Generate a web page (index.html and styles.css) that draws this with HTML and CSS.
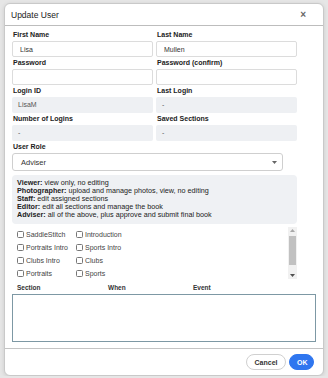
FILE: index.html
```html
<!DOCTYPE html>
<html lang="en">
<head>
    <meta charset="UTF-8">
    <meta name="viewport" content="width=device-width, initial-scale=1.0">
    <title>Update User</title>
    <link rel="stylesheet" href="styles.css">
</head>
<body>
    <div class="modal">
        <div class="modal-header">
            <span class="modal-title">Update User</span>
            <span class="modal-close">&times;</span>
        </div>

        <div class="modal-body">
            <div class="fields">
                <div class="field">
                    <label>First Name</label>
                    <input class="input" type="text" value="Lisa">
                </div>
                <div class="field">
                    <label>Last Name</label>
                    <input class="input" type="text" value="Mullen">
                </div>
                <div class="field">
                    <label>Password</label>
                    <input class="input" type="password" value="">
                </div>
                <div class="field">
                    <label>Password (confirm)</label>
                    <input class="input" type="password" value="">
                </div>
                <div class="field">
                    <label>Login ID</label>
                    <div class="readonly">LisaM</div>
                </div>
                <div class="field">
                    <label>Last Login</label>
                    <div class="readonly">-</div>
                </div>
                <div class="field">
                    <label>Number of Logins</label>
                    <div class="readonly">-</div>
                </div>
                <div class="field">
                    <label>Saved Sections</label>
                    <div class="readonly">-</div>
                </div>
            </div>

            <div class="field">
                <label>User Role</label>
                <div class="select">
                    <span>Adviser</span>
                    <svg class="caret" width="5" height="3" viewBox="0 0 5 3"><path d="M0 0h5L2.5 3z" fill="#666"/></svg>
                </div>
            </div>

            <div class="role-help">
                <div><b>Viewer:</b> view only, no editing</div>
                <div><b>Photographer:</b> upload and manage photos, view, no editing</div>
                <div><b>Staff:</b> edit assigned sections</div>
                <div><b>Editor:</b> edit all sections and manage the book</div>
                <div><b>Adviser:</b> all of the above, plus approve and submit final book</div>
            </div>

            <div class="sections">
                <div class="section-list">
                    <label class="check"><span class="box"></span>SaddleStitch</label>
                    <label class="check"><span class="box"></span>Introduction</label>
                    <label class="check"><span class="box"></span>Portraits Intro</label>
                    <label class="check"><span class="box"></span>Sports Intro</label>
                    <label class="check"><span class="box"></span>Clubs Intro</label>
                    <label class="check"><span class="box"></span>Clubs</label>
                    <label class="check"><span class="box"></span>Portraits</label>
                    <label class="check"><span class="box"></span>Sports</label>
                </div>
                <div class="scrollbar">
                    <svg width="5" height="3" viewBox="0 0 5 3"><path d="M0 3h5L2.5 0z" fill="#a8a8a8"/></svg>
                    <div class="scroll-track"><div class="scroll-thumb"></div></div>
                    <svg width="5" height="3" viewBox="0 0 5 3"><path d="M0 0h5L2.5 3z" fill="#505050"/></svg>
                </div>
            </div>

            <div class="history-head">
                <span>Section</span>
                <span>When</span>
                <span>Event</span>
            </div>
            <div class="history"></div>
        </div>

        <div class="modal-footer">
            <button class="btn btn-cancel">Cancel</button>
            <button class="btn btn-ok">OK</button>
        </div>
    </div>
</body>
</html>
```

FILE: styles.css
```css
* {
    box-sizing: border-box;
}
body {
    margin: 0;
    background-color: #e6e6e6;
    font-family: "Liberation Sans", Arial, sans-serif;
    color: #222;
}
.modal {
    margin: 3px 0 0 4px;
    width: 320px;
    height: 373px;
    display: flex;
    flex-direction: column;
    background-color: #fff;
    border: 1px solid #c9c9c9;
    border-radius: 6px;
    box-shadow: 0 1px 4px rgba(0, 0, 0, 0.12);
}
.modal-header {
    height: 22px;
    flex: none;
    display: flex;
    align-items: center;
    justify-content: space-between;
    padding: 0 17px 0 6px;
    border-bottom: 1px solid #bdbdbd;
}
.modal-title {
    font-size: 8.5px;
    color: #222;
}
.modal-close {
    font-size: 10px;
    font-weight: bold;
    color: #666;
}
.modal-body {
    flex: 1;
    padding: 3px 7px 0 7px;
}
.fields {
    display: grid;
    grid-template-columns: 141px 141px;
    column-gap: 3px;
}
.field label {
    display: block;
    height: 12px;
    line-height: 12px;
    padding-left: 1px;
    font-size: 7px;
    font-weight: bold;
    color: #222;
}
.input {
    display: block;
    width: 100%;
    height: 16px;
    margin: 0;
    padding: 0 7px;
    border: 1px solid #dcdcdc;
    border-radius: 2px;
    font-family: inherit;
    font-size: 7px;
    color: #333;
    outline: none;
}
.readonly {
    height: 16px;
    line-height: 16px;
    padding: 0 6px;
    background-color: #eef0f3;
    border-radius: 2px;
    font-size: 7px;
    color: #555;
}
.select {
    width: 271px;
    height: 18px;
    display: flex;
    align-items: center;
    justify-content: space-between;
    padding: 0 5px 0 8px;
    border: 1px solid #cfcfcf;
    border-radius: 3px;
    font-size: 7.5px;
    color: #333;
}
.role-help {
    width: 285px;
    margin-top: 4px;
    padding: 4px 5px 5px;
    background-color: #eff1f4;
    border-radius: 4px;
    font-size: 7.2px;
    line-height: 8px;
    color: #222;
}
.sections {
    width: 285px;
    height: 52px;
    margin-top: 3px;
    display: flex;
}
.section-list {
    flex: 1;
    padding: 1px 5px 0;
    display: grid;
    grid-template-columns: 59px 59px;
    grid-auto-rows: 13px;
    align-content: start;
}
.scrollbar {
    width: 9px;
    display: flex;
    flex-direction: column;
    align-items: center;
    gap: 3px;
    padding: 2px 0;
    background-color: #f1f1f1;
}
.scroll-track {
    flex: 1;
    width: 100%;
}
.scroll-thumb {
    height: 29px;
    margin: 1px 1px 0;
    background-color: #c1c1c1;
}
.check {
    display: flex;
    align-items: center;
    gap: 2px;
    font-size: 7px;
    color: #444;
    white-space: nowrap;
}
.box {
    width: 7px;
    height: 7px;
    border: 1px solid #777;
    border-radius: 1.5px;
    background-color: #fff;
}
.history-head {
    display: grid;
    grid-template-columns: 91px 85px 1fr;
    height: 12px;
    line-height: 12px;
    margin-top: 3px;
    padding-left: 5px;
    font-size: 6.5px;
    font-weight: bold;
    color: #333;
}
.history {
    width: 304px;
    height: 48px;
    border: 1px solid #7d98a4;
}
.modal-footer {
    flex: none;
    height: 27px;
    display: flex;
    justify-content: flex-end;
    align-items: flex-start;
    gap: 3px;
    padding: 5px 9px 0 0;
    border-top: 1px solid #c4c4c4;
}
.btn {
    height: 16px;
    padding: 0 7px;
    border-radius: 8px;
    font-family: inherit;
    font-size: 7px;
    font-weight: bold;
    cursor: pointer;
}
.btn-cancel {
    width: 40px;
    background-color: #fff;
    border: 1px solid #d0d0d0;
    color: #333;
}
.btn-ok {
    width: 25px;
    background-color: #2f76ef;
    border: 1px solid #2f76ef;
    color: #fff;
}
```
